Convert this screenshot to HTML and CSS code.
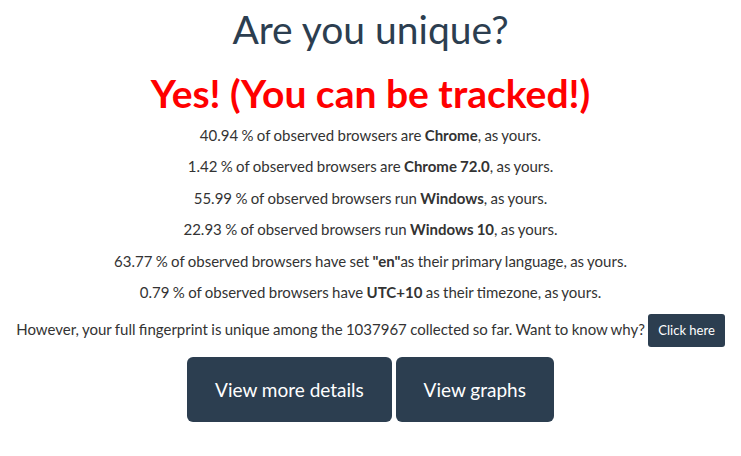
FILE: index.html
```html
<!DOCTYPE html>
<html lang="en">
<head>
    <meta charset="UTF-8">
    <meta name="viewport" content="width=device-width, initial-scale=1.0">
    <title>Am I Unique?</title>
    <link rel="stylesheet" href="styles.css">
</head>
<body>

    <div class="container">
        <h1 class="titulo">Are you unique?</h1>
        <h1 class="resposta">Yes! (You can be tracked!)</h1>

        <p>40.94 % of observed browsers are <strong>Chrome</strong>, as yours.</p>
        <p>1.42 % of observed browsers are <strong>Chrome 72.0</strong>, as yours.</p>
        <p>55.99 % of observed browsers run <strong>Windows</strong>, as yours.</p>
        <p>22.93 % of observed browsers run <strong>Windows 10</strong>, as yours.</p>
        <p>63.77 % of observed browsers have set <strong>"en"</strong>as their primary language, as yours.</p>
        <p>0.79 % of observed browsers have <strong>UTC+10</strong> as their timezone, as yours.</p>

        <p class="unico">However, your full fingerprint is unique among the 1037967 collected so far. Want to know why? <a href="#" class="btn btn-sm">Click here</a></p>

        <div class="acoes">
            <a href="#" class="btn btn-lg">View more details</a>
            <a href="#" class="btn btn-lg">View graphs</a>
        </div>
    </div>

</body>
</html>
```

FILE: styles.css
```css
body {
    font-family: Lato, "Helvetica Neue", Arial, sans-serif;
    font-size: 15px;
    line-height: 1.42857;
    color: #333;
    background-color: #fff;
    margin: 0;
    padding-top: 8px;
}

.container {
    text-align: center;
}

h1 {
    font-size: 39px;
    line-height: 43px;
    margin: 0;
}

.titulo {
    font-weight: 400;
    color: #2c3e50;
}

.resposta {
    font-weight: 700;
    color: #ff0000;
    margin-top: 21px;
    margin-bottom: 10px;
}

p {
    margin: 0 0 10px 0;
    word-spacing: -0.5px;
}

strong {
    font-weight: 700;
}

.btn {
    display: inline-block;
    background-color: #2c3e50;
    color: #fff;
    text-decoration: none;
    border: 1px solid transparent;
    word-spacing: normal;
}

.btn-sm {
    font-size: 13px;
    line-height: 1.5;
    padding: 6px 9px;
    border-radius: 3px;
}

.unico {
    margin-top: 0;
    margin-bottom: 10px;
}

.btn-lg {
    font-size: 19px;
    line-height: 25px;
    padding: 19px 27px;
    border-radius: 6px;
}
```
